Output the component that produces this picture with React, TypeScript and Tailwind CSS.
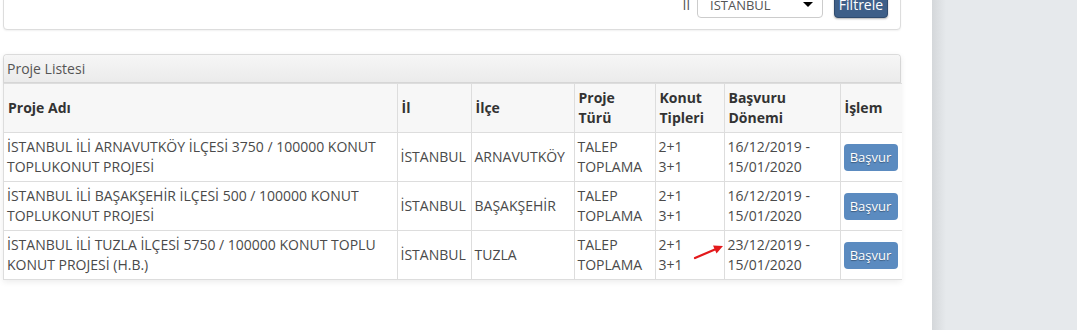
import React from "react";

type Proje = {
  ad: string[];
  il: string;
  ilce: string;
  tur: string[];
  tipler: string[];
  donem: string[];
};

const projeler: Proje[] = [
  {
    ad: ["İSTANBUL İLİ ARNAVUTKÖY İLÇESİ 3750 / 100000 KONUT", "TOPLUKONUT PROJESİ"],
    il: "İSTANBUL",
    ilce: "ARNAVUTKÖY",
    tur: ["TALEP", "TOPLAMA"],
    tipler: ["2+1", "3+1"],
    donem: ["16/12/2019 -", "15/01/2020"],
  },
  {
    ad: ["İSTANBUL İLİ BAŞAKŞEHİR İLÇESİ 500 / 100000 KONUT", "TOPLUKONUT PROJESİ"],
    il: "İSTANBUL",
    ilce: "BAŞAKŞEHİR",
    tur: ["TALEP", "TOPLAMA"],
    tipler: ["2+1", "3+1"],
    donem: ["16/12/2019 -", "15/01/2020"],
  },
  {
    ad: ["İSTANBUL İLİ TUZLA İLÇESİ 5750 / 100000 KONUT TOPLU", "KONUT PROJESİ (H.B.)"],
    il: "İSTANBUL",
    ilce: "TUZLA",
    tur: ["TALEP", "TOPLAMA"],
    tipler: ["2+1", "3+1"],
    donem: ["23/12/2019 -", "15/01/2020"],
  },
];

function Lines({ items }: { items: string[] }) {
  return (
    <>
      {items.map((t, i) => (
        <React.Fragment key={i}>
          {i > 0 && <br />}
          {t}
        </React.Fragment>
      ))}
    </>
  );
}

const th = "border border-[#dddddd] px-[4px] py-[4px] text-left align-middle font-bold text-[#333333]";
const td = "border border-[#dddddd] px-[3px] py-[4px] align-middle text-[#4a4a4a]";

export default function App() {
  return (
    <div
      className="flex h-[330px] w-[1077px] overflow-hidden bg-white text-[14px] leading-[20px]"
      style={{ fontFamily: '"Open Sans", "Liberation Sans", sans-serif' }}
    >
      <div className="relative w-[932px] shrink-0 bg-white pl-[3px]">
        {/* filtre kartı, sayfa yukarı kaydırılmış */}
        <div className="-mt-[30px] flex w-[898px] items-center justify-end gap-[7px] rounded-b-[4px] border border-[#dddddd] bg-white pb-[11px] pr-[12px] pt-[20px] shadow-[0_1px_2px_rgba(0,0,0,0.06)]">
          <span className="text-[14px] text-[#555555]">İl</span>
          <div className="flex h-[27px] w-[126px] items-center justify-between rounded-[4px] border border-[#cccccc] bg-white pl-[12px] pr-[9px] text-[13px] text-[#555555]">
            <span>İSTANBUL</span>
            <span className="h-0 w-0 border-l-[5px] border-r-[5px] border-t-[5px] border-l-transparent border-r-transparent border-t-black" />
          </div>
          <button className="ml-[4px] h-[27px] w-[54px] rounded-[4px] border border-[#2f4b6e] bg-[#3e5f88] text-[14px] leading-[25px] text-white shadow-[0_1px_2px_rgba(0,0,0,0.3)]">
            Filtrele
          </button>
        </div>

        {/* proje listesi */}
        <div className="mt-[24px] w-[898px] rounded-t-[4px] border-x border-t border-[#dddddd] shadow-[0_2px_6px_rgba(0,0,0,0.08)]">
          <div className="h-[28px] rounded-t-[4px] border-b border-[#d6d6d6] bg-[linear-gradient(to_bottom,#f6f6f6,#ebebeb)] px-[3px] text-[14px] leading-[28px] text-[#555555] shadow-[0_1px_3px_rgba(0,0,0,0.08)]">
            Proje Listesi
          </div>
          <table className="w-[898px] table-fixed border-collapse">
            <colgroup>
              <col className="w-[393px]" />
              <col className="w-[74px]" />
              <col className="w-[103px]" />
              <col className="w-[81px]" />
              <col className="w-[69px]" />
              <col className="w-[116px]" />
              <col className="w-[62px]" />
            </colgroup>
            <thead>
              <tr className="h-[49px] bg-[#f7f7f7]">
                <th className={`${th} border-l-0 px-[3px]`}>Proje Adı</th>
                <th className={th}>İl</th>
                <th className={th}>İlçe</th>
                <th className={th}>
                  Proje
                  <br />
                  Türü
                </th>
                <th className={th}>
                  Konut
                  <br />
                  Tipleri
                </th>
                <th className={th}>
                  Başvuru
                  <br />
                  Dönemi
                </th>
                <th className={`${th} border-r-0`}>İşlem</th>
              </tr>
            </thead>
            <tbody>
              {projeler.map((p, i) => (
                <tr key={i} className="h-[49px] bg-white">
                  <td className={`${td} border-l-0`}>
                    <Lines items={p.ad} />
                  </td>
                  <td className={td}>{p.il}</td>
                  <td className={td}>{p.ilce}</td>
                  <td className={td}>
                    <Lines items={p.tur} />
                  </td>
                  <td className={td}>
                    <Lines items={p.tipler} />
                  </td>
                  <td className={td}>
                    <Lines items={p.donem} />
                  </td>
                  <td className={`${td} border-r-0`}>
                    <button className="h-[27px] w-[54px] rounded-[4px] bg-[#5b8bc0] text-[13px] leading-[27px] text-white [text-shadow:0_1px_1px_rgba(0,0,0,0.35)]">
                      Başvur
                    </button>
                  </td>
                </tr>
              ))}
            </tbody>
          </table>
        </div>

        {/* kırmızı ok */}
        <svg className="absolute left-[692px] top-[242px]" width="34" height="20" viewBox="0 0 34 20">
          <line x1="3" y1="16" x2="24" y2="7" stroke="#e3191b" strokeWidth="2.2" strokeLinecap="round" />
          <polygon points="31,4 21,3.5 24.5,11.5" fill="#e3191b" />
        </svg>
      </div>

      <div className="flex-1 bg-[linear-gradient(to_right,#d4d7da,#e6e9ec_14px)]" />
    </div>
  );
}
